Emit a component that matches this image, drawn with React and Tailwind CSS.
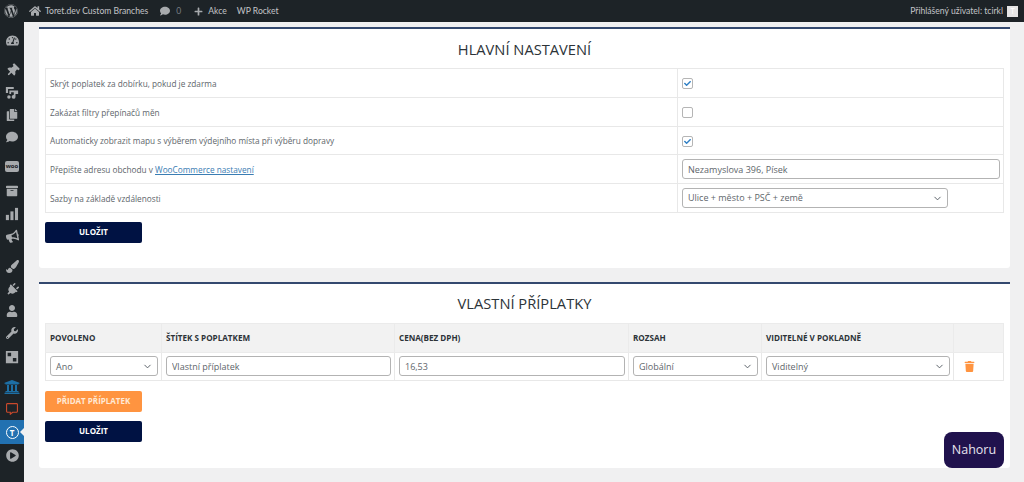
import React from 'react';
import { ChevronDown } from 'lucide-react';
import {
  FaWordpress, FaHome, FaComment, FaPlus, FaTachometerAlt, FaThumbtack, FaCopy,
  FaArchive, FaBullhorn, FaPaintBrush, FaPlug, FaUser, FaWrench, FaTrash, FaCheck, FaPlayCircle,
  FaUniversity, FaRegCommentAlt,
} from 'react-icons/fa';

const BarsIcon = () => (
  <svg viewBox="0 0 16 16" className="w-[14px] h-[14px]" fill="currentColor">
    <rect x="1" y="9" width="3.5" height="6" />
    <rect x="6.2" y="5" width="3.5" height="10" />
    <rect x="11.4" y="1" width="3.5" height="14" />
  </svg>
);

const SettingsIcon = () => (
  <svg viewBox="0 0 16 16" className="w-[14px] h-[14px]" fill="currentColor">
    <path d="M1 1h14v14H1z M3 3v4h4V3z M9 9v4h4V9z" fillRule="evenodd" />
  </svg>
);

const MediaIcon = () => (
  <svg viewBox="0 0 16 16" className="w-[14px] h-[14px]" fill="currentColor">
    <path d="M1 1h9v2.5H3.5V8H1z" />
    <path d="M5 5h10v4H12v3.5a2.2 2.2 0 1 1-2-2.2V7H7v2H5z" />
    <circle cx="4.5" cy="12.5" r="2" />
  </svg>
);

const menuItems = [
  { icon: <FaTachometerAlt size={13} />, cls: 'mt-[7px]' },
  { icon: <FaThumbtack size={13} className="rotate-45" />, cls: 'mt-[8px]' },
  { icon: <MediaIcon />, cls: 'mt-[1px]' },
  { icon: <FaCopy size={12} />, cls: '' },
  { icon: <FaComment size={12} />, cls: '' },
  { icon: <span className="bg-[#a7aaad] text-[#1d2327] rounded-[2px] text-[6px] leading-[11px] px-[1px] font-bold">woo</span>, cls: 'mt-[7px]' },
  { icon: <FaArchive size={12} />, cls: 'mt-[3px]' },
  { icon: <BarsIcon />, cls: 'mt-[1px]' },
  { icon: <FaBullhorn size={13} className="-rotate-12" />, cls: '' },
  { icon: <FaPaintBrush size={13} />, cls: 'mt-[8px]' },
  { icon: <FaPlug size={13} className="rotate-45" />, cls: 'mt-[1px]' },
  { icon: <FaUser size={12} />, cls: '' },
  { icon: <FaWrench size={12} />, cls: '' },
  { icon: <SettingsIcon />, cls: 'mt-[2px]' },
  { icon: <FaUniversity size={16} className="text-[#1d6fa5]" />, cls: 'mt-[8px]' },
  { icon: <FaRegCommentAlt size={12} className="text-[#c9492c]" />, cls: '' },
];

const Sidebar = () => (
  <aside className="w-[24px] shrink-0 bg-[#1d2327] text-[#a7aaad] flex flex-col">
    {menuItems.map((item, i) => (
      <div key={i} className={`h-[22px] flex items-center justify-center ${item.cls}`}>
        {item.icon}
      </div>
    ))}
    <div className="relative h-[24px] bg-[#2271b1] flex items-center justify-center">
      <span className="w-[13px] h-[13px] rounded-full border border-white text-white text-[8px] leading-[11px] text-center font-bold">T</span>
      <span className="absolute right-0 top-[8px] border-y-[4px] border-y-transparent border-r-[4px] border-r-[#f0f0f1]" />
    </div>
    <div className="h-[22px] flex items-center justify-center">
      <FaPlayCircle size={13} />
    </div>
  </aside>
);

const AdminBar = () => (
  <header className="h-[22px] shrink-0 bg-[#1d2327] text-[#c3c4c7] flex items-center text-[8.6px] font-['Lato',sans-serif]">
    <FaWordpress size={14} className="ml-[4px] text-[#a7aaad]" />
    <FaHome size={12} className="ml-[11px] text-[#a7aaad]" />
    <span className="ml-[4px]">Toret.dev Custom Branches</span>
    <FaComment size={10} className="ml-[12px] text-[#a7aaad]" />
    <span className="ml-[6px] text-[#787c82]">0</span>
    <FaPlus size={9} className="ml-[13px] text-[#a7aaad]" />
    <span className="ml-[5px]">Akce</span>
    <span className="ml-[10px]">WP Rocket</span>
    <span className="ml-auto">Přihlášený uživatel: tcirkl</span>
    <span className="ml-[4px] mr-[6px] w-[11px] h-[11px] bg-[#e5e5e5] text-white text-[7px] leading-[11px] text-center">T</span>
  </header>
);

const Checkbox = ({ checked }) => (
  <span className="mt-[2px] w-[11px] h-[11px] rounded-[2px] border border-[#b5b5b5] bg-white flex items-center justify-center text-[#2f7fc4]">
    {checked && <FaCheck size={7} />}
  </span>
);

const TextInput = ({ value }) => (
  <input
    readOnly
    value={value}
    className="block w-full h-[20px] px-[5px] rounded-[3px] border border-[#b3b3b3] bg-white text-[9px] text-[#60666b] outline-none"
  />
);

const Select = ({ value, className }) => (
  <div className={`relative h-[20px] flex items-center px-[5px] rounded-[3px] border border-[#b3b3b3] bg-white text-[9px] text-[#60666b] ${className}`}>
    {value}
    <ChevronDown size={11} strokeWidth={2} className="absolute right-[4px] top-[4px] text-[#50575e]" />
  </div>
);

const SaveButton = () => (
  <button className="block w-[97px] h-[21px] rounded-[2px] bg-[#001243] text-white text-[8px] font-bold">
    ULOŽIT
  </button>
);

const settingRows = [
  { label: 'Skrýt poplatek za dobírku, pokud je zdarma', control: <Checkbox checked /> },
  { label: 'Zakázat filtry přepínačů měn', control: <Checkbox /> },
  { label: 'Automaticky zobrazit mapu s výběrem výdejního místa při výběru dopravy', control: <Checkbox checked /> },
  {
    label: <>Přepište adresu obchodu v <a href="#" className="text-[#3a7db3] underline">WooCommerce nastavení</a></>,
    control: <TextInput value="Nezamyslova 396, Písek" />,
  },
  { label: 'Sazby na základě vzdálenosti', control: <Select value="Ulice + město + PSČ + země" className="w-[266px]" /> },
];

const tdClass = 'border border-[#e8e8e8] pl-[4px] pr-[3px] align-middle';
const thClass = 'border border-[#ebebeb] bg-[#f2f2f2] pl-[4px] pt-[1px] text-left text-[8.1px] font-bold text-[#2c3338]';

export default function App() {
  return (
    <div className="h-[482px] overflow-hidden flex flex-col bg-[#f0f0f1] font-['Open_Sans',sans-serif]">
      <AdminBar />
      <div className="flex flex-1 min-h-0">
        <Sidebar />
        <main className="flex-1 pl-[15px] pr-[14px] pt-[5px]">
          <section className="bg-white border-t-2 border-[#34496f] px-[6px] pb-[25px] rounded-b-[3px]">
            <h2 className="h-[39px] pt-[2px] flex items-center justify-center text-[14.7px] font-medium text-[#2c3338]">HLAVNÍ NASTAVENÍ</h2>
            <table className="w-full table-fixed border-collapse">
              <tbody>
                {settingRows.map((row, i) => (
                  <tr key={i} className="h-[28.8px]">
                    <td className={`${tdClass} pt-[2px] w-[632px] text-[8.25px] text-[#60666b]`}>{row.label}</td>
                    <td className={tdClass}>{row.control}</td>
                  </tr>
                ))}
              </tbody>
            </table>
            <div className="mt-[9px]">
              <SaveButton />
            </div>
          </section>

          <section className="mt-[14px] bg-white border-t-2 border-[#34496f] px-[6px] pb-[26px] rounded-b-[3px]">
            <h2 className="h-[39px] flex items-center justify-center text-[14.7px] font-medium text-[#2c3338]">VLASTNÍ PŘÍPLATKY</h2>
            <table className="w-full table-fixed border-collapse">
              <thead>
                <tr className="h-[29px]">
                  <th className={`${thClass} w-[116px]`}>POVOLENO</th>
                  <th className={`${thClass} w-[233px]`}>ŠTÍTEK S POPLATKEM</th>
                  <th className={`${thClass} w-[234px]`}>CENA(BEZ DPH)</th>
                  <th className={`${thClass} w-[133px]`}>ROZSAH</th>
                  <th className={`${thClass} w-[192px]`}>VIDITELNÉ V POKLADNĚ</th>
                  <th className={thClass}></th>
                </tr>
              </thead>
              <tbody>
                <tr className="h-[28px]">
                  <td className={tdClass}><Select value="Ano" /></td>
                  <td className={tdClass}><TextInput value="Vlastní příplatek" /></td>
                  <td className={tdClass}><TextInput value="16,53" /></td>
                  <td className={tdClass}><Select value="Globální" /></td>
                  <td className={tdClass}><Select value="Viditelný" /></td>
                  <td className={`${tdClass} pl-[10px]`}><FaTrash size={11} className="text-[#ff9440]" /></td>
                </tr>
              </tbody>
            </table>
            <button className="block mt-[10px] w-[97px] h-[21px] rounded-[2px] bg-[#ff9440] text-[#ffe9d6] text-[8px] font-bold">
              PŘIDAT PŘÍPLATEK
            </button>
            <div className="mt-[9px]">
              <SaveButton />
            </div>
          </section>
        </main>
      </div>
      <button className="fixed left-[944px] top-[432px] w-[60px] h-[36px] rounded-[8px] bg-[#20124d] text-[#e8e4f0] text-[12.5px]">
        Nahoru
      </button>
    </div>
  );
}
